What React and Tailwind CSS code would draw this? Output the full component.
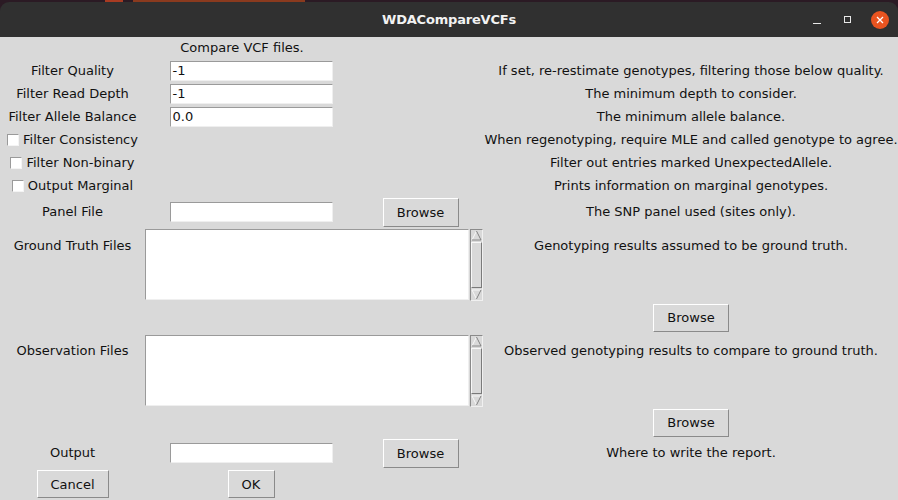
import React from 'react';

const Entry = ({ value = '' }) => (
  <div className="w-[163px] h-[20px] bg-white border border-t-[#9a9a9a] border-l-[#9a9a9a] border-b-[#efefef] border-r-[#efefef] pl-[2px] leading-[18px] text-[13px] text-[#111]">
    {value}
  </div>
);

const TkButton = ({ label, w = 'w-[76px]', h = 'h-[29px]' }) => (
  <button
    className={`${w} ${h} bg-[#d9d9d9] border border-t-white border-l-white border-b-[#8a8a8a] border-r-[#8a8a8a] text-[13px] text-[#111] leading-none`}
  >
    {label}
  </button>
);

const Check = ({ label }) => (
  <label className="flex items-center gap-[4px] text-[13px] text-[#111]">
    <span className="w-[12px] h-[12px] bg-white border border-t-[#9a9a9a] border-l-[#9a9a9a] border-b-[#f4f4f4] border-r-[#f4f4f4]" />
    {label}
  </label>
);

const Scrollbar = () => (
  <div className="w-[13px] h-[72px] bg-[#d9d9d9] border border-t-[#8a8a8a] border-l-[#8a8a8a] border-b-[#f0f0f0] border-r-[#f0f0f0] flex flex-col">
    <svg width="11" height="11" viewBox="0 0 11 11" className="shrink-0">
      <polygon points="5.5,1 10,10 1,10" fill="#d9d9d9" stroke="#f8f8f8" />
      <line x1="1" y1="10" x2="10" y2="10" stroke="#7a7a7a" />
      <line x1="10" y1="10" x2="5.5" y2="1" stroke="#7a7a7a" />
    </svg>
    <div className="flex-1 my-[1px] border border-t-[#f8f8f8] border-l-[#f8f8f8] border-b-[#7a7a7a] border-r-[#7a7a7a]" />
    <svg width="11" height="11" viewBox="0 0 11 11" className="shrink-0">
      <polygon points="1,1 10,1 5.5,10" fill="#d9d9d9" stroke="#f8f8f8" />
      <line x1="10" y1="1" x2="5.5" y2="10" stroke="#7a7a7a" />
    </svg>
  </div>
);

const TextList = () => (
  <div className="col-span-2 self-start mt-[2px] flex gap-[1px]">
    <div className="w-[324px] h-[71px] bg-white border border-t-[#9a9a9a] border-l-[#9a9a9a] border-b-[#efefef] border-r-[#efefef]" />
    <Scrollbar />
  </div>
);

const Cell = ({ children, className = '' }) => (
  <div className={`flex items-center justify-center text-[13px] text-[#111] whitespace-nowrap ${className}`}>
    {children}
  </div>
);

export default function App() {
  return (
    <div className="w-[898px] h-[500px] bg-[#2b1a24] overflow-hidden font-['DejaVu_Sans',sans-serif]">
      {/* windows behind */}
      <div className="h-[2px] flex">
        <div className="w-[105px]" />
        <div className="w-[18px] bg-[#a83b22]" />
        <div className="w-[10px]" />
        <div className="w-[172px] bg-[#8a3a1e]" />
      </div>

      {/* title bar */}
      <div className="h-[35px] bg-[#303030] rounded-t-[9px] flex items-center justify-center relative">
        <span className="text-[13px] font-bold text-[#f2f2f2] tracking-[-0.2px]">WDACompareVCFs</span>
        <div className="absolute right-[9px] top-0 h-full flex items-center gap-[23px]">
          <div className="w-[8px] h-[1px] bg-[#e8e8e8] mt-[8px]" />
          <div className="w-[7px] h-[7px] border border-[#e8e8e8]" />
          <div className="w-[18px] h-[18px] rounded-full bg-[#e95420] flex items-center justify-center -ml-[3px]">
            <svg width="8" height="8" viewBox="0 0 8 8">
              <path d="M1 1 L7 7 M7 1 L1 7" stroke="#fff" strokeWidth="1.3" />
            </svg>
          </div>
        </div>
      </div>

      {/* body */}
      <div className="h-[463px] bg-[#d9d9d9] grid grid-cols-[145px_212px_127px_414px] grid-rows-[22px_23px_23px_23px_23px_23px_23px_30px_75px_31px_75px_29px_32px_30px]">
        <Cell className="col-span-3">Compare VCF files.</Cell>
        <div />

        <Cell>Filter Quality</Cell>
        <Cell><Entry value="-1" /></Cell>
        <div />
        <Cell>If set, re-restimate genotypes, filtering those below quality.</Cell>

        <Cell>Filter Read Depth</Cell>
        <Cell><Entry value="-1" /></Cell>
        <div />
        <Cell>The minimum depth to consider.</Cell>

        <Cell>Filter Allele Balance</Cell>
        <Cell><Entry value="0.0" /></Cell>
        <div />
        <Cell>The minimum allele balance.</Cell>

        <Cell><Check label="Filter Consistency" /></Cell>
        <div />
        <div />
        <Cell>When regenotyping, require MLE and called genotype to agree.</Cell>

        <Cell><Check label="Filter Non-binary" /></Cell>
        <div />
        <div />
        <Cell>Filter out entries marked UnexpectedAllele.</Cell>

        <Cell><Check label="Output Marginal" /></Cell>
        <div />
        <div />
        <Cell>Prints information on marginal genotypes.</Cell>

        <Cell>Panel File</Cell>
        <Cell><Entry /></Cell>
        <Cell><TkButton label="Browse" /></Cell>
        <Cell>The SNP panel used (sites only).</Cell>

        <Cell className="items-start pt-[9px]">Ground Truth Files</Cell>
        <TextList />
        <Cell className="items-start pt-[9px]">Genotyping results assumed to be ground truth.</Cell>

        <div />
        <div />
        <div />
        <Cell><TkButton label="Browse" h="h-[28px]" /></Cell>

        <Cell className="items-start pt-[8px]">Observation Files</Cell>
        <TextList />
        <Cell className="items-start pt-[8px]">Observed genotyping results to compare to ground truth.</Cell>

        <div />
        <div />
        <div />
        <Cell><TkButton label="Browse" h="h-[28px]" /></Cell>

        <Cell>Output</Cell>
        <Cell><Entry /></Cell>
        <Cell><TkButton label="Browse" /></Cell>
        <Cell>Where to write the report.</Cell>

        <Cell><TkButton label="Cancel" w="w-[72px]" h="h-[28px]" /></Cell>
        <Cell><TkButton label="OK" w="w-[47px]" h="h-[28px]" /></Cell>
        <div />
        <div />
      </div>
    </div>
  );
}
